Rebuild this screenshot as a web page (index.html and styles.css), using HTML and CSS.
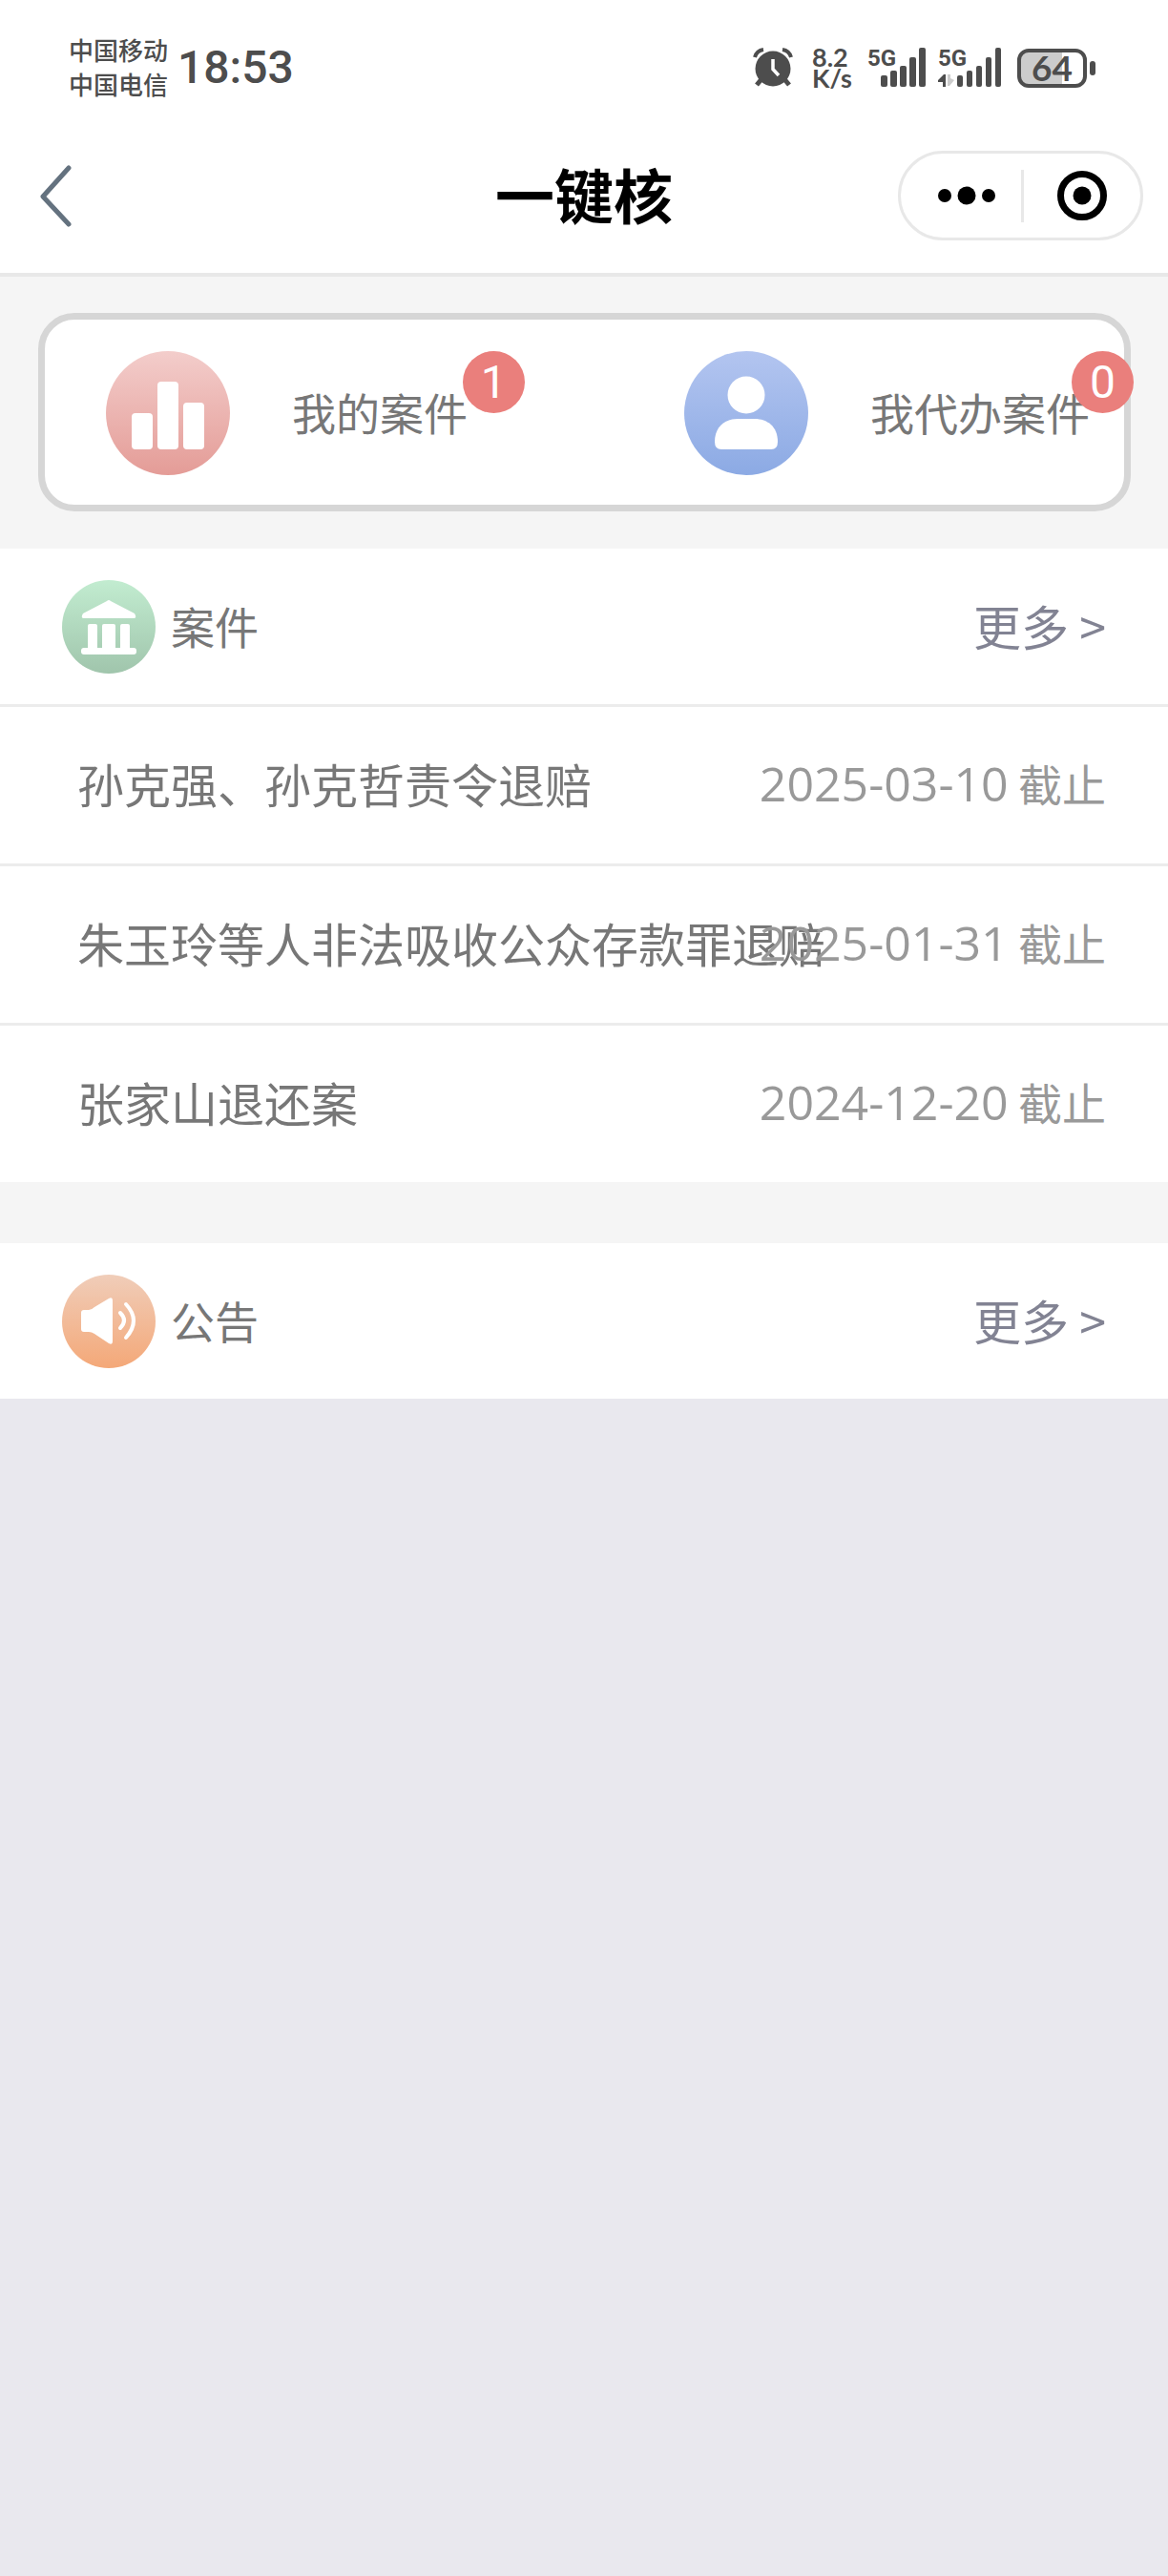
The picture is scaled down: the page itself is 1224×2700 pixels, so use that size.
FILE: index.html
```html
<!DOCTYPE html>
<html lang="zh-CN">
<head>
    <meta charset="UTF-8">
    <meta name="viewport" content="width=device-width, initial-scale=1.0">
    <title>一键核</title>
    <link rel="stylesheet" href="styles.css">
</head>
<body>
    <div class="status-bar">
        <div class="carriers">
            <span>中国移动</span>
            <span>中国电信</span>
        </div>
        <span class="time">18:53</span>
        <div class="status-icons">
            <svg class="alarm" width="42" height="42" viewBox="0 0 42 42" aria-hidden="true">
                <path d="M2 10Q4 3 11 2M40 10Q38 3 31 2" fill="none" stroke="#4d4d4d" stroke-width="4"/>
                <path d="M9 33L4 39M33 33L38 39" stroke="#4d4d4d" stroke-width="5"/>
                <circle cx="21" cy="22" r="18.500" fill="#4d4d4d"/>
                <path d="M21 12V22.500L27 29" fill="none" stroke="#fff" stroke-width="3.500"/>
            </svg>
            <div class="speed">
                <span>8.2</span>
                <span>K/s</span>
            </div>
            <div class="signal">
                <span class="network">5G</span>
                <svg width="62" height="42" viewBox="0 0 62 42" aria-hidden="true">
                    <g fill="#4d4d4d">
                        <rect x="14" y="29" width="7" height="12" rx="2"/>
                        <rect x="24" y="24" width="7" height="17" rx="2"/>
                        <rect x="34" y="19" width="7" height="22" rx="2"/>
                        <rect x="44" y="10" width="7" height="31" rx="2"/>
                        <rect x="54" y="0" width="7" height="41" rx="2"/>
                    </g>
                </svg>
            </div>
            <div class="signal">
                <span class="network">5G</span>
                <svg width="67" height="42" viewBox="0 0 67 42" aria-hidden="true">
                    <path d="M8 28V41H5V36H0V34L6 28Z" fill="#4d4d4d"/>
                    <path d="M10 28H13V32L17 34L12 40H10Z" fill="#ccc"/>
                    <g fill="#4d4d4d">
                        <rect x="20" y="29" width="6" height="12" rx="2"/>
                        <rect x="30" y="24" width="6" height="17" rx="2"/>
                        <rect x="40" y="19" width="6" height="22" rx="2"/>
                        <rect x="50" y="10" width="6" height="31" rx="2"/>
                        <rect x="60" y="0" width="6" height="41" rx="2"/>
                    </g>
                </svg>
            </div>
            <div class="battery"><span>64</span></div>
        </div>
    </div>

    <header class="navbar">
        <button type="button" class="back" aria-label="返回">
            <svg width="36" height="66" viewBox="0 0 36 66" aria-hidden="true">
                <path d="M32 4L5 34L32 63" fill="none" stroke="#64727f" stroke-width="5" stroke-linecap="round" stroke-linejoin="round"/>
            </svg>
        </button>
        <h1>一键核</h1>
        <div class="capsule">
            <button type="button" class="menu" aria-label="更多操作">
                <svg width="62" height="20" viewBox="0 0 62 20" aria-hidden="true">
                    <circle cx="8" cy="10" r="7"/>
                    <circle cx="31" cy="10" r="9.500"/>
                    <circle cx="54" cy="10" r="7"/>
                </svg>
            </button>
            <button type="button" class="close" aria-label="关闭">
                <svg width="52" height="52" viewBox="0 0 52 52" aria-hidden="true">
                    <circle cx="26" cy="26" r="22.500" fill="none" stroke="#000" stroke-width="7"/>
                    <circle cx="26" cy="26" r="9.500"/>
                </svg>
            </button>
        </div>
    </header>

    <main>
        <div class="summary">
            <nav class="card">
                <a href="#" class="entry">
                    <svg width="130" height="130" viewBox="0 0 130 130" aria-hidden="true">
                        <defs>
                            <linearGradient id="red" x1="0" y1="0" x2="0" y2="1">
                                <stop offset="0" stop-color="#f3cdcb"/>
                                <stop offset="1" stop-color="#e49c97"/>
                            </linearGradient>
                        </defs>
                        <circle cx="65" cy="65" r="65" fill="url(#red)"/>
                        <g fill="#fff">
                            <rect x="27" y="65" width="22" height="38" rx="4"/>
                            <rect x="54" y="32" width="22" height="71" rx="4"/>
                            <rect x="81" y="54" width="22" height="49" rx="4"/>
                        </g>
                    </svg>
                    <span class="entry-label">我的案件<span class="badge">1</span></span>
                </a>
                <a href="#" class="entry">
                    <svg width="130" height="130" viewBox="0 0 130 130" aria-hidden="true">
                        <defs>
                            <linearGradient id="blue" x1="0" y1="0" x2="0" y2="1">
                                <stop offset="0" stop-color="#b3c5f0"/>
                                <stop offset="1" stop-color="#8caae4"/>
                            </linearGradient>
                        </defs>
                        <circle cx="65" cy="65" r="65" fill="url(#blue)"/>
                        <circle cx="65" cy="46" r="19.500" fill="#fff"/>
                        <path d="M32 95C32 79 43 71 56 71H74C87 71 98 79 98 95Q98 103 91 103H39Q32 103 32 95Z" fill="#fff"/>
                    </svg>
                    <span class="entry-label">我代办案件<span class="badge">0</span></span>
                </a>
            </nav>
        </div>

        <section class="panel">
            <div class="panel-head">
                <svg width="98" height="98" viewBox="0 0 98 98" aria-hidden="true">
                    <defs>
                        <linearGradient id="green" x1="0" y1="0" x2="0" y2="1">
                            <stop offset="0" stop-color="#c2ecd0"/>
                            <stop offset="1" stop-color="#a0c5ac"/>
                        </linearGradient>
                    </defs>
                    <circle cx="49" cy="49" r="49" fill="url(#green)"/>
                    <g fill="#fff">
                        <path d="M47 22Q49 20 51 22L76 35Q79 40 75 40H23Q19 40 22 35Z"/>
                        <rect x="27" y="46" width="10" height="28" rx="2"/>
                        <rect x="42" y="46" width="14" height="28" rx="2"/>
                        <rect x="61" y="46" width="10" height="28" rx="2"/>
                        <rect x="20" y="71" width="58" height="7" rx="3"/>
                    </g>
                </svg>
                <h2>案件</h2>
                <a href="#" class="more">更多 &gt;</a>
            </div>
            <ul class="case-list">
                <li>
                    <a href="#" class="case-title">孙克强、孙克哲责令退赔</a>
                    <span class="deadline"><time>2025-03-10</time> 截止</span>
                </li>
                <li>
                    <a href="#" class="case-title">朱玉玲等人非法吸收公众存款罪退赔</a>
                    <span class="deadline"><time>2025-01-31</time> 截止</span>
                </li>
                <li>
                    <a href="#" class="case-title">张家山退还案</a>
                    <span class="deadline"><time>2024-12-20</time> 截止</span>
                </li>
            </ul>
        </section>

        <section class="panel">
            <div class="panel-head">
                <svg width="98" height="98" viewBox="0 0 98 98" aria-hidden="true">
                    <defs>
                        <linearGradient id="orange" x1="0" y1="0" x2="0" y2="1">
                            <stop offset="0" stop-color="#f0cdb9"/>
                            <stop offset="1" stop-color="#f4a878"/>
                        </linearGradient>
                    </defs>
                    <circle cx="49" cy="49" r="49" fill="url(#orange)"/>
                    <path d="M20 40Q20 37 23 37H28Q31 37 34 34L49 25Q53 23 53 27V70Q53 74 49 72L34 62Q31 60 28 60H23Q20 60 20 57Z" fill="#fff"/>
                    <path d="M61 40Q69 48 61 56M67 31Q83 48 67 66" fill="none" stroke="#fff" stroke-width="4" stroke-linecap="round"/>
                </svg>
                <h2>公告</h2>
                <a href="#" class="more">更多 &gt;</a>
            </div>
        </section>
    </main>
</body>
</html>
```
FILE: styles.css
```css
* {
    box-sizing: border-box;
}
body {
    font-family: "Noto Sans CJK SC", sans-serif;
    margin: 0;
    background-color: #e9e8ee;
    color: #777;
}
a {
    color: inherit;
    text-decoration: none;
}
button {
    padding: 0;
    background: none;
    border: none;
    cursor: pointer;
}
svg {
    display: block;
    flex-shrink: 0;
}

/* status bar */
.status-bar {
    display: flex;
    align-items: center;
    height: 124px;
    padding: 18px 76px 0 72px;
    background: #fff;
    color: #4d4d4d;
    font-weight: 500;
}
.carriers {
    display: flex;
    flex-direction: column;
    padding-bottom: 2px;
    font-size: 26px;
    line-height: 36px;
}
.time {
    margin-left: 10px;
    font-family: Roboto, sans-serif;
    font-size: 48px;
    line-height: 48px;
}
.status-icons {
    display: flex;
    align-items: center;
    margin-left: auto;
    font-family: Lato, sans-serif;
}
.speed {
    display: flex;
    flex-direction: column;
    width: 42px;
    margin: 0 16px 0 20px;
    font-size: 27px;
    font-weight: 700;
    line-height: 22px;
}
.signal {
    position: relative;
    margin-right: 12px;
}
.network {
    position: absolute;
    top: 0;
    left: 0;
    font-family: Roboto, sans-serif;
    font-size: 24px;
    font-weight: 700;
    line-height: 22px;
}
.battery {
    position: relative;
    display: flex;
    align-items: center;
    justify-content: center;
    width: 73px;
    height: 41px;
    margin: 0 9px 0 4px;
    border: 4px solid #4d4d4d;
    border-radius: 12px;
    background: linear-gradient(to right, #ccc 66%, #fff 66%);
    font-size: 37px;
    font-weight: 700;
    line-height: 36px;
}
.battery::after {
    content: "";
    position: absolute;
    top: 9px;
    right: -13px;
    width: 6px;
    height: 15px;
    border-radius: 3px;
    background: #4d4d4d;
}

/* title bar */
.navbar {
    display: grid;
    grid-template-columns: 1fr auto 1fr;
    align-items: center;
    height: 166px;
    padding: 0 26px;
    background: #fff;
    border-bottom: 4px solid #e8e8e8;
}
.back {
    justify-self: start;
    margin-left: 14px;
}
h1 {
    margin: 0;
    padding-bottom: 4px;
    color: #000;
    font-size: 62px;
    line-height: 80px;
}
.capsule {
    display: flex;
    justify-self: end;
    align-items: center;
    width: 257px;
    height: 94px;
    border: 3px solid #e8e8e8;
    border-radius: 47px;
}
.capsule button {
    display: flex;
    align-items: center;
    justify-content: center;
    width: 50%;
    height: 55px;
}
.capsule .menu {
    padding-left: 12px;
}
.capsule .close {
    border-left: 3px solid #e8e8e8;
}

/* entry card */
.summary {
    padding: 38px 39px 39px 40px;
    background: #f5f5f5;
}
.card {
    display: flex;
    justify-content: space-between;
    padding: 33px 36px 31px 64px;
    background: #fff;
    border: 7px solid #d6d6d6;
    border-radius: 38px;
}
.entry {
    display: flex;
    gap: 65px;
}
.entry-label {
    position: relative;
    display: flex;
    align-items: center;
    padding-bottom: 4px;
    font-size: 46px;
    white-space: nowrap;
}
.badge {
    position: absolute;
    top: 0;
    left: calc(70% + 50px);
    width: 65px;
    height: 65px;
    border-radius: 50%;
    background: #ea7f7c;
    color: #fff;
    font-family: Roboto, sans-serif;
    font-size: 48px;
    line-height: 65px;
    text-align: center;
}

/* lists */
.panel {
    background: #fff;
}
.panel + .panel {
    border-top: 64px solid #f5f5f5;
}
.panel-head {
    display: flex;
    align-items: center;
    padding: 33px 65px 32px;
}
h2 {
    margin: 0 auto 0 16px;
    padding-bottom: 4px;
    font-size: 46px;
    font-weight: 400;
    line-height: 60px;
}
.more {
    padding-bottom: 4px;
    color: #828393;
    font-size: 50px;
    line-height: 60px;
}
.case-list {
    margin: 0;
    padding: 0;
    list-style: none;
}
.case-list li {
    display: flex;
    align-items: center;
    justify-content: space-between;
    height: 167px;
    padding: 0 65px 6px 81px;
    border-top: 3px solid #ececec;
}
.case-title {
    min-width: 0;
    font-size: 49px;
    white-space: nowrap;
}
.deadline {
    flex-shrink: 0;
    color: #999;
    font-size: 46px;
    white-space: nowrap;
}
.deadline time {
    font-family: "Open Sans", sans-serif;
    font-size: 50px;
    line-height: 60px;
}
```
